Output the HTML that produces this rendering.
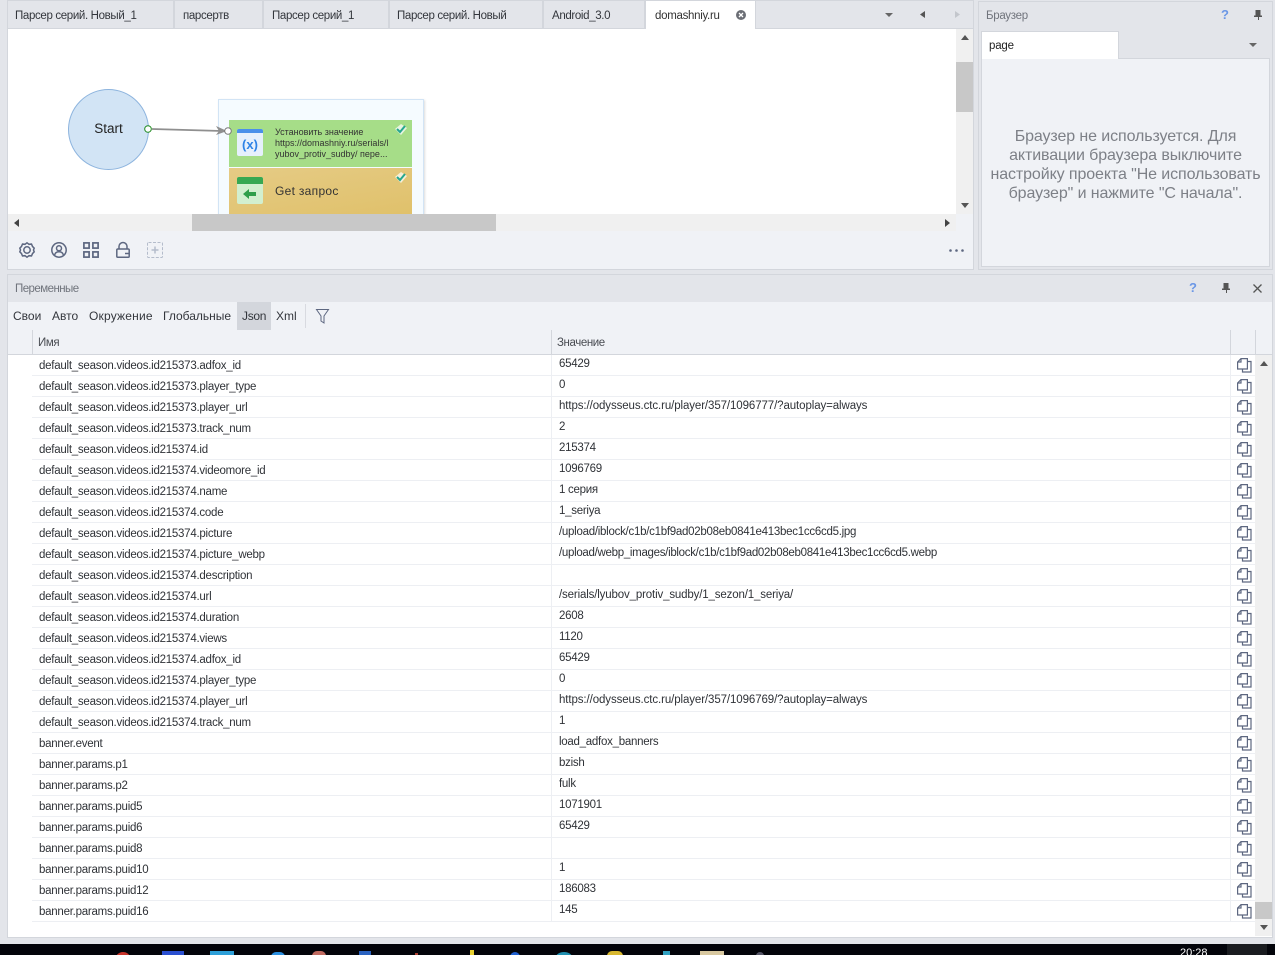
<!DOCTYPE html>
<html><head><meta charset="utf-8"><style>
html,body{margin:0;padding:0;width:1275px;height:955px;overflow:hidden;background:#e3e5ea;font-family:"Liberation Sans",sans-serif;font-size:11.5px;color:#333}
div{position:absolute;box-sizing:border-box;white-space:nowrap}
svg{position:absolute;overflow:visible}
.t{top:1px;height:27px;background:#e3e5ea;border-right:2px solid #d3d6dc;line-height:30px;padding-left:8px;color:#33363c;letter-spacing:-.35px}
.r{left:32px;width:1223px;height:21px;border-bottom:1px solid #edeff3;background:#fff}
.n{position:absolute;left:7px;top:4px;line-height:14px;letter-spacing:-.25px;color:#2f3237}
.v{position:absolute;left:527px;top:2px;line-height:14px;letter-spacing:-.27px;color:#2f3237}
.u{letter-spacing:-.1px}
.c{position:absolute;left:519px;top:0;width:1px;height:21px;background:#edeff3}
.d{position:absolute;left:1198px;top:0;width:1px;height:21px;background:#edeff3}
.k{position:absolute;left:1205px;top:3px;width:15px;height:15px}
.m{top:302px;height:28px;line-height:28px;font-size:12px;color:#33363c}
</style></head><body>
<svg width="0" height="0" style="position:absolute"><defs>
<g id="cp" fill="#fff" stroke="#5d6780" stroke-width="1.2"><path d="M5.500 3.500h8.500v10.500h-8.500z"/><path d="M.6 4 4 .6h6.400v10.400H.6z"/><path d="M4 .6V4H.6" fill="none"/></g>
</defs></svg>

<!-- Top panel -->
<div style="left:7px;top:0;width:967px;height:270px;background:#f0f2f6;border:1px solid #d3d6dc"></div>
<div class="t" style="left:8px;width:167px;padding-left:7px">Парсер серий. Новый_1</div>
<div class="t" style="left:175px;width:89px">парсертв</div>
<div class="t" style="left:264px;width:126px">Парсер серий_1</div>
<div class="t" style="left:390px;width:154px;padding-left:7px">Парсер серий. Новый</div>
<div class="t" style="left:544px;width:102px">Android_3.0</div>
<div class="t" style="left:646px;width:110px;background:#fff;border-right:1px solid #d3d6dc;color:#333;padding-left:9px;letter-spacing:-.3px">domashniy.ru</div>
<svg style="left:736px;top:10px" width="10" height="10"><circle cx="5" cy="5" r="5" fill="#6b6e75"/><path d="M3 3l4 4M7 3l-4 4" stroke="#fff" stroke-width="1.300"/></svg>
<div style="left:756px;top:1px;width:217px;height:27px;background:#e3e5ea"></div>
<svg style="left:885px;top:13px" width="8" height="4"><path d="M0 0h8L4 4z" fill="#666"/></svg>
<svg style="left:920px;top:11px" width="5" height="7"><path d="M5 0v7L0 3.500z" fill="#555"/></svg>
<svg style="left:955px;top:11px" width="5" height="7"><path d="M0 0v7l5-3.500z" fill="#c3c6cc"/></svg>
<div style="left:8px;top:28px;width:965px;height:1px;background:#d3d6dc"></div>
<div style="left:646px;top:28px;width:109px;height:1px;background:#fff"></div>

<!-- Canvas -->
<div style="left:8px;top:29px;width:948px;height:185px;background:#fff;overflow:hidden">
  <div style="left:60px;top:60px;width:81px;height:81px;border-radius:50%;background:#d2e4f5;border:1px solid #8db4de;text-align:center;line-height:77px;font-size:13.500px;color:#222">Start</div>
  <div style="left:210px;top:70px;width:206px;height:130px;background:#f5fbff;border:1px solid #d2e4f5;box-shadow:1px 1px 2px #ddd"></div>
  <div style="left:221px;top:91px;width:183px;height:47px;background:#a6dd88"></div>
  <div style="left:221px;top:139px;width:183px;height:60px;background:linear-gradient(170deg,#e5cb85,#dfbf66)"></div>
  <svg style="left:0;top:0" width="300" height="185"><path d="M144 100 L214 102" stroke="#8f8f8f" stroke-width="1.800" fill="none"/><path d="M208 97l11 5-11 4 3-4z" fill="#8f8f8f"/><circle cx="140" cy="100" r="3.300" fill="#fff" stroke="#1e8a1e" stroke-width="1"/><circle cx="220" cy="102" r="3.300" fill="#fff" stroke="#777" stroke-width="1"/></svg>
  <svg style="left:229px;top:100px" width="26" height="28"><rect width="26" height="27" rx="2" fill="#e6f0fc"/><path d="M0 4V2a2 2 0 0 1 2-2h22a2 2 0 0 1 2 2v2z" fill="#4a90ea"/></svg>
  <div style="left:229px;top:107px;width:26px;text-align:center;font:bold 13px/18px 'Liberation Sans',sans-serif;color:#2d82e6">(x)</div>
  <div style="left:267px;top:98px;font-size:9px;line-height:11px;color:#333">Установить значение<br>https://domashniy.ru/serials/l<br>yubov_protiv_sudby/ пере...</div>
  <svg style="left:387px;top:95px" width="12" height="11"><path d="M6 0l6 4-6 7-6-6z" fill="#e7f3e0"/><path d="M2 5l3 3 5-6" stroke="#25a78e" stroke-width="2" fill="none"/></svg>
  <svg style="left:229px;top:148px" width="26" height="28"><rect width="26" height="27" rx="2" fill="#d2efcf"/><path d="M0 7V2a2 2 0 0 1 2-2h22a2 2 0 0 1 2 2v5z" fill="#37a852"/><path d="M6 17l6-5v3h7v4h-7v3z" fill="#2f9e4a"/></svg>
  <div style="left:267px;top:154px;font-size:12px;line-height:16px;color:#333;letter-spacing:.3px">Get запрос</div>
  <svg style="left:387px;top:143px" width="12" height="11"><path d="M6 0l6 4-6 7-6-6z" fill="#f5efd9"/><path d="M2 5l3 3 5-6" stroke="#25a78e" stroke-width="2" fill="none"/></svg>
</div>
<!-- canvas scrollbars -->
<div style="left:956px;top:29px;width:17px;height:185px;background:#f0f0f0"></div>
<div style="left:956px;top:62px;width:17px;height:50px;background:#c8c8c8"></div>
<svg style="left:961px;top:35px" width="8" height="5"><path d="M0 5h8L4 0z" fill="#555"/></svg>
<svg style="left:961px;top:203px" width="8" height="5"><path d="M0 0h8L4 5z" fill="#555"/></svg>
<div style="left:8px;top:214px;width:948px;height:17px;background:#f0f0f0"></div>
<div style="left:192px;top:214px;width:304px;height:17px;background:#c8c8c8"></div>
<svg style="left:14px;top:219px" width="5" height="8"><path d="M5 0v8L0 4z" fill="#444"/></svg>
<svg style="left:945px;top:219px" width="5" height="8"><path d="M0 0v8l5-4z" fill="#444"/></svg>

<!-- canvas toolbar -->
<svg style="left:19px;top:242px" width="16" height="16" fill="none" stroke="#5d6780" stroke-width="1.500"><path d="M8 .8l2 1.500 2.500-.2 1 2.300 1.700 1.800-.7 1.800.7 1.800-1.700 1.800-1 2.300-2.500-.2L8 15.200l-2-1.500-2.500.2-1-2.300L.8 9.800 1.500 8 .8 6.200l1.700-1.800 1-2.300 2.500.2z"/><circle cx="8" cy="8" r="3.200"/></svg>
<svg style="left:51px;top:242px" width="16" height="16" fill="none" stroke="#5d6780" stroke-width="1.500"><circle cx="8" cy="8" r="7.200"/><circle cx="8" cy="6.300" r="2.500"/><path d="M3.500 13.500c.5-3 2.500-3.700 4.500-3.700s4 .7 4.500 3.700"/></svg>
<svg style="left:83px;top:242px" width="16" height="16" fill="none" stroke="#5d6780" stroke-width="1.700"><rect x=".9" y=".9" width="5.200" height="5.200"/><rect x="9.900" y=".9" width="5.200" height="5.200"/><rect x=".9" y="9.900" width="5.200" height="5.200"/><rect x="9.900" y="9.900" width="5.200" height="5.200"/></svg>
<svg style="left:116px;top:242px" width="14" height="16" fill="none" stroke="#5d6780" stroke-width="1.500"><path d="M3 7V4.500a4 4 0 0 1 8 0V7"/><rect x=".8" y="7" width="12.400" height="8.200" rx="1"/><path d="M9 11.500h4" /></svg>
<svg style="left:147px;top:242px" width="16" height="16" fill="none" stroke="#b4bccb" stroke-width="1"><rect x=".5" y=".5" width="15" height="15" rx="1" stroke-dasharray="3 1.500"/><path d="M8 4.500v7M4.500 8h7" stroke-width="1.500"/></svg>
<svg style="left:949px;top:249px" width="16" height="3" fill="#5d6780"><circle cx="1.500" cy="1.500" r="1.300"/><circle cx="7.500" cy="1.500" r="1.300"/><circle cx="13.500" cy="1.500" r="1.300"/></svg>

<!-- Browser panel -->
<div style="left:978px;top:1px;width:295px;height:269px;background:#e3e5ea;border:1px solid #d3d6dc"></div>
<div style="left:986px;top:9px;line-height:14px;color:#70747c;letter-spacing:-.3px">Браузер</div>
<div style="left:1221px;top:7px;font:bold 13px/16px 'Liberation Sans',sans-serif;color:#6b97e6">?</div>
<svg style="left:1254px;top:10px" width="8" height="10" fill="#555"><path d="M1.500 0h5v5.500h1.500v1.500h-3v3h-1v-3H0V5.500h1.500z"/></svg>
<div style="left:981px;top:58px;width:289px;height:209px;background:#f0f2f6;border:1px solid #d3d6dc"></div>
<div style="left:981px;top:31px;width:138px;height:28px;background:#fff;border:1px solid #d3d6dc;border-bottom:none;line-height:28px;padding-left:7px;color:#222;letter-spacing:-.2px">page</div>
<svg style="left:1249px;top:43px" width="8" height="4"><path d="M0 0h8L4 4z" fill="#666"/></svg>
<div style="left:982px;top:127px;width:287px;text-align:center;font-size:16px;line-height:19px;color:#7d8087;letter-spacing:-.1px">Браузер не используется. Для<br>активации браузера выключите<br>настройку проекта "Не использовать<br>браузер" и нажмите "С начала".</div>

<!-- Variables panel -->
<div style="left:7px;top:274px;width:1266px;height:664px;background:#fff;border:1px solid #d3d6dc"></div>
<div style="left:8px;top:275px;width:1264px;height:27px;background:#e3e5ea"></div>
<div style="left:15px;top:282px;line-height:14px;color:#70747c;letter-spacing:-.55px">Переменные</div>
<div style="left:1189px;top:280px;font:bold 13px/16px 'Liberation Sans',sans-serif;color:#6b97e6">?</div>
<svg style="left:1222px;top:283px" width="8" height="10" fill="#555"><path d="M1.500 0h5v5.500h1.500v1.500h-3v3h-1v-3H0V5.500h1.500z"/></svg>
<svg style="left:1253px;top:284px" width="9" height="9"><path d="M.5.500l8 8M8.500.500l-8 8" stroke="#555" stroke-width="1.300"/></svg>
<div style="left:8px;top:302px;width:1264px;height:53px;background:#f0f2f6"></div>
<div class="m" style="left:13px">Свои</div>
<div class="m" style="left:52px">Авто</div>
<div class="m" style="left:89px;letter-spacing:.2px">Окружение</div>
<div class="m" style="left:163px">Глобальные</div>
<div style="left:237px;top:302px;width:34px;height:28px;background:#d3d6dc"></div>
<div class="m" style="left:242px;letter-spacing:-.3px">Json</div>
<div class="m" style="left:276px">Xml</div>
<div style="left:305px;top:304px;width:1px;height:24px;background:#d8dae0"></div>
<svg style="left:316px;top:309px" width="13" height="15" fill="none" stroke="#5d6780" stroke-width="1"><path d="M.5.500h12L8 7v7l-3-2V7z"/></svg>
<div style="left:32px;top:330px;width:1px;height:24px;background:#d3d6dc"></div>
<div style="left:551px;top:330px;width:1px;height:24px;background:#d3d6dc"></div>
<div style="left:1230px;top:330px;width:1px;height:24px;background:#d3d6dc"></div>
<div style="left:1255px;top:330px;width:1px;height:24px;background:#d3d6dc"></div>
<div style="left:38px;top:336px;line-height:14px;color:#4a4d53;letter-spacing:-.4px">Имя</div>
<div style="left:557px;top:336px;line-height:14px;color:#4a4d53;letter-spacing:-.4px">Значение</div>
<div style="left:8px;top:354px;width:1264px;height:1px;background:#d3d6dc"></div>

<div class="r" style="top:355px"><span class="n">default_season.videos.id215373.adfox_id</span><span class="v">65429</span><span class="c"></span><span class="d"></span><svg class="k" viewBox="0 0 15 15"><use href="#cp"/></svg></div>
<div class="r" style="top:376px"><span class="n">default_season.videos.id215373.player_type</span><span class="v">0</span><span class="c"></span><span class="d"></span><svg class="k" viewBox="0 0 15 15"><use href="#cp"/></svg></div>
<div class="r" style="top:397px"><span class="n">default_season.videos.id215373.player_url</span><span class="v u">https://odysseus.ctc.ru/player/357/1096777/?autoplay=always</span><span class="c"></span><span class="d"></span><svg class="k" viewBox="0 0 15 15"><use href="#cp"/></svg></div>
<div class="r" style="top:418px"><span class="n">default_season.videos.id215373.track_num</span><span class="v">2</span><span class="c"></span><span class="d"></span><svg class="k" viewBox="0 0 15 15"><use href="#cp"/></svg></div>
<div class="r" style="top:439px"><span class="n">default_season.videos.id215374.id</span><span class="v">215374</span><span class="c"></span><span class="d"></span><svg class="k" viewBox="0 0 15 15"><use href="#cp"/></svg></div>
<div class="r" style="top:460px"><span class="n">default_season.videos.id215374.videomore_id</span><span class="v">1096769</span><span class="c"></span><span class="d"></span><svg class="k" viewBox="0 0 15 15"><use href="#cp"/></svg></div>
<div class="r" style="top:481px"><span class="n">default_season.videos.id215374.name</span><span class="v">1 серия</span><span class="c"></span><span class="d"></span><svg class="k" viewBox="0 0 15 15"><use href="#cp"/></svg></div>
<div class="r" style="top:502px"><span class="n">default_season.videos.id215374.code</span><span class="v">1_seriya</span><span class="c"></span><span class="d"></span><svg class="k" viewBox="0 0 15 15"><use href="#cp"/></svg></div>
<div class="r" style="top:523px"><span class="n">default_season.videos.id215374.picture</span><span class="v">/upload/iblock/c1b/c1bf9ad02b08eb0841e413bec1cc6cd5.jpg</span><span class="c"></span><span class="d"></span><svg class="k" viewBox="0 0 15 15"><use href="#cp"/></svg></div>
<div class="r" style="top:544px"><span class="n">default_season.videos.id215374.picture_webp</span><span class="v" style="letter-spacing:-.3px">/upload/webp_images/iblock/c1b/c1bf9ad02b08eb0841e413bec1cc6cd5.webp</span><span class="c"></span><span class="d"></span><svg class="k" viewBox="0 0 15 15"><use href="#cp"/></svg></div>
<div class="r" style="top:565px"><span class="n">default_season.videos.id215374.description</span><span class="c"></span><span class="d"></span><svg class="k" viewBox="0 0 15 15"><use href="#cp"/></svg></div>
<div class="r" style="top:586px"><span class="n">default_season.videos.id215374.url</span><span class="v" style="letter-spacing:-.15px">/serials/lyubov_protiv_sudby/1_sezon/1_seriya/</span><span class="c"></span><span class="d"></span><svg class="k" viewBox="0 0 15 15"><use href="#cp"/></svg></div>
<div class="r" style="top:607px"><span class="n">default_season.videos.id215374.duration</span><span class="v">2608</span><span class="c"></span><span class="d"></span><svg class="k" viewBox="0 0 15 15"><use href="#cp"/></svg></div>
<div class="r" style="top:628px"><span class="n">default_season.videos.id215374.views</span><span class="v">1120</span><span class="c"></span><span class="d"></span><svg class="k" viewBox="0 0 15 15"><use href="#cp"/></svg></div>
<div class="r" style="top:649px"><span class="n">default_season.videos.id215374.adfox_id</span><span class="v">65429</span><span class="c"></span><span class="d"></span><svg class="k" viewBox="0 0 15 15"><use href="#cp"/></svg></div>
<div class="r" style="top:670px"><span class="n">default_season.videos.id215374.player_type</span><span class="v">0</span><span class="c"></span><span class="d"></span><svg class="k" viewBox="0 0 15 15"><use href="#cp"/></svg></div>
<div class="r" style="top:691px"><span class="n">default_season.videos.id215374.player_url</span><span class="v u">https://odysseus.ctc.ru/player/357/1096769/?autoplay=always</span><span class="c"></span><span class="d"></span><svg class="k" viewBox="0 0 15 15"><use href="#cp"/></svg></div>
<div class="r" style="top:712px"><span class="n">default_season.videos.id215374.track_num</span><span class="v">1</span><span class="c"></span><span class="d"></span><svg class="k" viewBox="0 0 15 15"><use href="#cp"/></svg></div>
<div class="r" style="top:733px"><span class="n">banner.event</span><span class="v">load_adfox_banners</span><span class="c"></span><span class="d"></span><svg class="k" viewBox="0 0 15 15"><use href="#cp"/></svg></div>
<div class="r" style="top:754px"><span class="n">banner.params.p1</span><span class="v">bzish</span><span class="c"></span><span class="d"></span><svg class="k" viewBox="0 0 15 15"><use href="#cp"/></svg></div>
<div class="r" style="top:775px"><span class="n">banner.params.p2</span><span class="v">fulk</span><span class="c"></span><span class="d"></span><svg class="k" viewBox="0 0 15 15"><use href="#cp"/></svg></div>
<div class="r" style="top:796px"><span class="n">banner.params.puid5</span><span class="v">1071901</span><span class="c"></span><span class="d"></span><svg class="k" viewBox="0 0 15 15"><use href="#cp"/></svg></div>
<div class="r" style="top:817px"><span class="n">banner.params.puid6</span><span class="v">65429</span><span class="c"></span><span class="d"></span><svg class="k" viewBox="0 0 15 15"><use href="#cp"/></svg></div>
<div class="r" style="top:838px"><span class="n">banner.params.puid8</span><span class="c"></span><span class="d"></span><svg class="k" viewBox="0 0 15 15"><use href="#cp"/></svg></div>
<div class="r" style="top:859px"><span class="n">banner.params.puid10</span><span class="v">1</span><span class="c"></span><span class="d"></span><svg class="k" viewBox="0 0 15 15"><use href="#cp"/></svg></div>
<div class="r" style="top:880px"><span class="n">banner.params.puid12</span><span class="v">186083</span><span class="c"></span><span class="d"></span><svg class="k" viewBox="0 0 15 15"><use href="#cp"/></svg></div>
<div class="r" style="top:901px"><span class="n">banner.params.puid16</span><span class="v">145</span><span class="c"></span><span class="d"></span><svg class="k" viewBox="0 0 15 15"><use href="#cp"/></svg></div>

<!-- vars scrollbar -->
<div style="left:1255px;top:355px;width:17px;height:581px;background:#f0f0f0"></div>
<div style="left:1255px;top:902px;width:17px;height:17px;background:#c8c8c8"></div>
<svg style="left:1260px;top:361px" width="8" height="5"><path d="M0 5h8L4 0z" fill="#555"/></svg>
<svg style="left:1260px;top:925px" width="8" height="5"><path d="M0 0h8L4 5z" fill="#555"/></svg>

<!-- Taskbar -->
<div style="left:0;top:944px;width:1275px;height:11px;background:#03040a;overflow:hidden">
  <div style="left:115px;top:8px;width:16px;height:16px;border-radius:50%;background:#c8342b"></div>
  <div style="left:162px;top:7px;width:22px;height:10px;background:#2a4fd0"></div>
  <div style="left:210px;top:7px;width:24px;height:10px;background:#2d9fd8"></div>
  <div style="left:271px;top:8px;width:14px;height:10px;background:#2a8fe0;border-radius:6px"></div>
  <div style="left:312px;top:7px;width:14px;height:10px;background:#c06a60;border-radius:7px"></div>
  <div style="left:359px;top:7px;width:12px;height:10px;background:#2a62c0"></div>
  <div style="left:415px;top:9px;width:3px;height:6px;background:#b04030"></div>
  <div style="left:470px;top:6px;width:4px;height:10px;background:#e8d030"></div>
  <div style="left:510px;top:8px;width:10px;height:10px;background:#2060d0;border-radius:50%"></div>
  <div style="left:556px;top:8px;width:16px;height:10px;background:#2090b0;border-radius:50%"></div>
  <div style="left:607px;top:7px;width:16px;height:10px;background:#d8b830;border-radius:6px"></div>
  <div style="left:663px;top:7px;width:7px;height:10px;background:#30a0c0"></div>
  <div style="left:700px;top:7px;width:24px;height:10px;background:#d8c8a0"></div>
  <div style="left:756px;top:8px;width:8px;height:8px;background:#556;border-radius:50%"></div>
  <div style="left:1180px;top:3px;color:#fff;font-size:11px;line-height:12px">20:28</div>
  <div style="left:1227px;top:0;width:40px;height:11px;background:#1a1c20"></div>
</div>
</body></html>
